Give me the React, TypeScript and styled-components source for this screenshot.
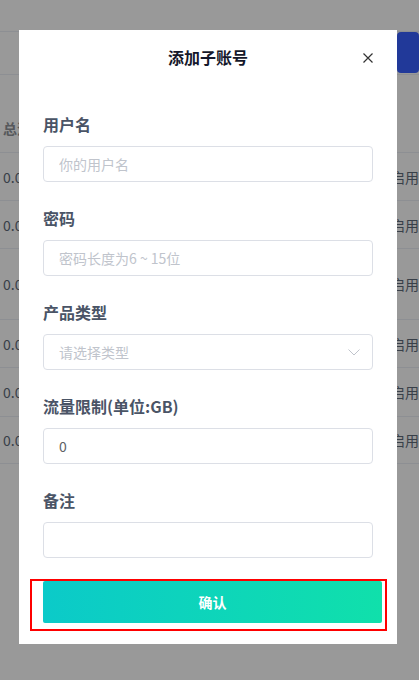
import React from "react";
import styled, { createGlobalStyle } from "styled-components";

const GlobalStyle = createGlobalStyle`
  html, body {
    margin: 0;
    padding: 0;
    background: #ffffff;
  }
  body {
    font-family: "Noto Sans CJK SC", "Liberation Sans", sans-serif;
  }
  * {
    box-sizing: border-box;
  }
`;

/* background page (sits under the mask) */

const Page = styled.div`
  padding-top: 31px;
  height: 680px;
  overflow: hidden;
`;

const Toolbar = styled.div`
  display: flex;
  height: 44px;
  border-top: 1px solid #ebeef5;
  border-bottom: 1px solid #ebeef5;
  padding-left: 397px;
  align-items: flex-start;
`;

const PrimaryButton = styled.div`
  width: 60px;
  height: 41px;
  background: #3860ff;
  border-radius: 4px;
`;

const HeadRow = styled.div`
  display: flex;
  align-items: flex-end;
  height: 78px;
  padding: 0 0 14px 3px;
  border-bottom: 1px solid #ebeef5;
  font-size: 14px;
  line-height: 20px;
  font-weight: 700;
  color: #909399;
`;

const Row = styled.div<{ $h: number }>`
  display: flex;
  align-items: center;
  height: ${(p) => p.$h}px;
  border-bottom: 1px solid #ebeef5;
  font-size: 14px;
  color: #606b7a;
`;

const Cell = styled.div`
  flex: 1;
  padding-left: 3px;
  white-space: nowrap;
`;

const StatusCell = styled.div`
  width: 28px;
  white-space: nowrap;
`;

/* dialog */

const Mask = styled.div`
  position: fixed;
  inset: 0;
  background: rgba(0, 0, 0, 0.4);
  overflow: auto;
`;

const Dialog = styled.div`
  width: 378px;
  margin: 30px 0 0 19px;
  background: #ffffff;
  padding: 15px 24px 13px;
`;

const Header = styled.div`
  display: grid;
  grid-template-columns: 1fr auto 1fr;
  align-items: center;
  height: 24px;
`;

const Title = styled.div`
  grid-column: 2;
  font-size: 16px;
  line-height: 24px;
  font-weight: 700;
  color: #15182a;
`;

const CloseButton = styled.button`
  grid-column: 3;
  justify-self: end;
  display: flex;
  align-items: center;
  justify-content: center;
  width: 10px;
  height: 10px;
  margin-top: 2px;
  padding: 0;
  border: none;
  background: none;
  cursor: pointer;
`;

const Body = styled.div`
  padding-top: 43px;
`;

const FormItem = styled.div`
  margin-bottom: 24px;
`;

const Label = styled.div`
  font-size: 16px;
  line-height: 24px;
  font-weight: 700;
  color: #4a5466;
  margin-bottom: 10px;
`;

const Field = styled.div`
  position: relative;
  display: flex;
  align-items: center;
  height: 36px;
  border: 1px solid #dcdfe6;
  border-radius: 4px;
  padding: 0 15px;
`;

const Input = styled.input`
  flex: 1;
  min-width: 0;
  border: none;
  outline: none;
  padding: 0;
  background: transparent;
  font-family: inherit;
  font-size: 14px;
  color: #606266;

  &::placeholder {
    color: #c0c4cc;
  }
`;

const Chevron = styled.svg`
  flex: none;
  margin-right: -3px;
`;

const Highlight = styled.div`
  margin: -3px -14px 0 -13px;
  border: 2px solid #ff0000;
  padding: 0 3px 6px 11px;
`;

const SubmitButton = styled.button`
  display: block;
  width: 100%;
  height: 42px;
  border: none;
  border-radius: 2px;
  background: linear-gradient(90deg, #0bcac9 0%, #10e0ab 100%);
  color: #ffffff;
  font-family: inherit;
  font-size: 14px;
  font-weight: 700;
  cursor: pointer;
`;

const rows = [48, 48, 71, 48, 49, 47];

const fields = [
  { label: "用户名", placeholder: "你的用户名" },
  { label: "密码", placeholder: "密码长度为6 ~ 15位" },
  { label: "产品类型", placeholder: "请选择类型", select: true },
  { label: "流量限制(单位:GB)", value: "0" },
  { label: "备注" },
];

export default function App() {
  return (
    <>
      <GlobalStyle />
      <Page>
        <Toolbar>
          <PrimaryButton />
        </Toolbar>
        <HeadRow>总流量</HeadRow>
        {rows.map((h, i) => (
          <Row key={i} $h={h}>
            <Cell>0.00</Cell>
            <StatusCell>启用</StatusCell>
          </Row>
        ))}
      </Page>

      <Mask>
        <Dialog>
          <Header>
            <Title>添加子账号</Title>
            <CloseButton aria-label="关闭">
              <svg width="10" height="10" viewBox="0 0 10 10">
                <path d="M0.5 0.5 L9.5 9.5 M9.5 0.5 L0.5 9.5" stroke="#333" strokeWidth="1.2" fill="none" />
              </svg>
            </CloseButton>
          </Header>
          <Body>
            {fields.map((f) => (
              <FormItem key={f.label}>
                <Label>{f.label}</Label>
                <Field>
                  <Input
                    placeholder={f.placeholder}
                    defaultValue={f.value}
                    readOnly={f.select}
                  />
                  {f.select && (
                    <Chevron width="12" height="7" viewBox="0 0 12 7">
                      <path d="M0.5 0.5 L6 6 L11.5 0.5" stroke="#c0c4cc" strokeWidth="1" fill="none" />
                    </Chevron>
                  )}
                </Field>
              </FormItem>
            ))}
            <Highlight>
              <SubmitButton>确认</SubmitButton>
            </Highlight>
          </Body>
        </Dialog>
      </Mask>
    </>
  );
}
